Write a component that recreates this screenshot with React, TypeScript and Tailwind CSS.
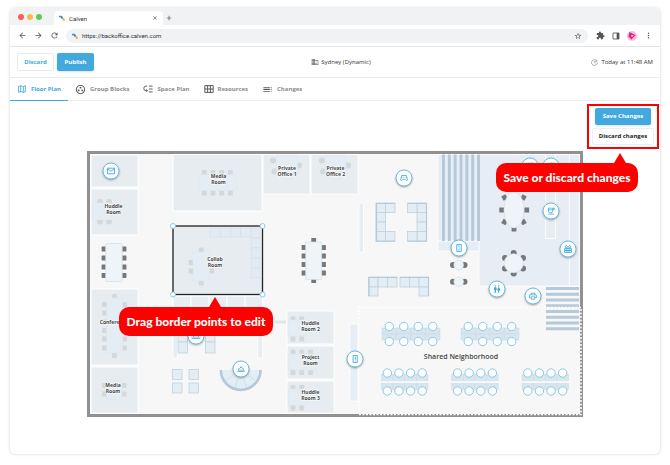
import type { ReactNode } from 'react';
import {
  MdArrowBack,
  MdArrowForward,
  MdClose,
  MdAdd,
  MdDomain,
  MdExtension,
  MdMoreVert,
  MdOutlineCoffee,
  MdOutlineGroupWork,
  MdOutlineMap,
  MdOutlinePrint,
  MdOutlineRoomService,
  MdOutlineWeekend,
  MdRefresh,
  MdStarBorder,
  MdToc,
  MdWc,
} from 'react-icons/md';

const PLAN_W = 496;
const PLAN_H = 266;

type Point = [number, number];
type Box = [number, number, number, number];

/* ---------- icons ---------- */

function CalvenLogo() {
  return (
    <svg viewBox="0 0 12 12" className="size-[6px] shrink-0" aria-hidden="true">
      <path d="M1 3h4" stroke="#2f9fe0" strokeWidth="3.500" strokeLinecap="round" />
      <path d="M5 4.500l2.500 3" stroke="#2b5f93" strokeWidth="3" />
      <path d="M8 7.500l2 2.500" stroke="#f5a94a" strokeWidth="4" strokeLinecap="round" />
    </svg>
  );
}

function SpacePlanIcon() {
  return (
    <svg viewBox="0 0 24 24" className="size-[10px]" fill="none" stroke="currentColor" strokeWidth="2.200" aria-hidden="true">
      <path d="M10 5H7a5 5 0 0 0-5 5v1a5 5 0 0 0 5 5h3M7.500 12.500l3.500 3.500-3.500 3.500M14 5h9M14 12h9M14 19h9" />
    </svg>
  );
}

function ResourcesIcon() {
  return (
    <svg viewBox="0 0 24 20" className="h-[8px] w-[10px]" fill="none" stroke="currentColor" strokeWidth="2.400" aria-hidden="true">
      <path d="M1.500 1.500h21v17h-21zM1.500 10h21M8.500 1.500v17M15.500 1.500v17" />
    </svg>
  );
}

function RefreshClockIcon() {
  return (
    <svg viewBox="0 0 24 24" className="size-[7px]" fill="none" stroke="currentColor" strokeWidth="2" aria-hidden="true">
      <path d="M19 5a10 10 0 1 0 3 7M20 2v6h-6M12 7v5l4 2" />
    </svg>
  );
}

function SidePanelIcon() {
  return (
    <svg viewBox="0 0 24 24" className="size-[8px]" aria-hidden="true">
      <path d="M3 3h18v18H3z" fill="none" stroke="currentColor" strokeWidth="2.500" />
      <path d="M14 3h7v18h-7z" fill="currentColor" />
    </svg>
  );
}

function PinIcon({ children }: { children: ReactNode }) {
  return (
    <svg viewBox="0 0 24 24" className="size-[9px]" fill="none" stroke="currentColor" strokeWidth="2.400" aria-hidden="true">
      {children}
    </svg>
  );
}

function MailIcon() {
  return (
    <PinIcon>
      <path d="M2.500 4.500h19v15h-19zM2.500 6l9.500 6.500L21.500 6" />
    </PinIcon>
  );
}

function GamepadIcon() {
  return (
    <PinIcon>
      <path d="M6 5h12l3 12c0 2-2.500 2.500-4 1l-3-3h-4l-3 3c-1.500 1.500-4 1-4-1zM8 10h3M15 10h1.500" />
    </PinIcon>
  );
}

function DoorIcon() {
  return (
    <PinIcon>
      <path d="M6 2.500h12v19H6zM10 7h4M10 17h4M13 12h2.500" />
    </PinIcon>
  );
}

function PhoneBoothIcon() {
  return (
    <PinIcon>
      <path d="M7 2.500h11v19H7zM13 6v8M12 18h2" />
    </PinIcon>
  );
}

function LockerIcon() {
  return (
    <PinIcon>
      <path d="M3 11h18v10H3zM9 11v10M15 11v10M3 16h18" />
      <circle cx="7.500" cy="6" r="3" />
      <circle cx="16.500" cy="6" r="3" />
    </PinIcon>
  );
}

/* ---------- browser window ---------- */

function BrowserChrome() {
  return (
    <div>
      <div className="flex h-[18px] items-end rounded-t-md bg-[#f0f2f4] pl-2">
        <div className="flex gap-[3px] pb-[5px]">
          <span className="size-[6px] rounded-full bg-[#fa5f57]" />
          <span className="size-[6px] rounded-full bg-[#f6bd4f]" />
          <span className="size-[6px] rounded-full bg-[#5fca56]" />
        </div>
        <div className="ml-3 flex h-[14px] w-[109px] items-center gap-1 rounded-t bg-white px-[5px] font-[Roboto,sans-serif] text-[6px] text-[#333]">
          <CalvenLogo />
          <span className="grow">Calven</span>
          <button type="button" aria-label="Close tab">
            <MdClose className="size-[6px]" />
          </button>
        </div>
        <button type="button" aria-label="New tab" className="mb-[3px] ml-[2px] text-[#444]">
          <MdAdd className="size-[8px]" />
        </button>
      </div>
      <div className="flex h-[22px] items-center border-b border-[#e3e5ea] pr-[7px] pl-2 text-[#555]">
        <div className="flex gap-[7px]">
          <button type="button" aria-label="Back">
            <MdArrowBack className="size-[9px]" />
          </button>
          <button type="button" aria-label="Forward">
            <MdArrowForward className="size-[9px]" />
          </button>
          <button type="button" aria-label="Reload">
            <MdRefresh className="size-[9px]" />
          </button>
        </div>
        <div className="ml-[7px] flex h-[14px] grow items-center gap-1 rounded-full bg-[#f0f2f4] px-[6px] font-[Roboto,sans-serif] text-[6px]">
          <CalvenLogo />
          <input
            aria-label="Address"
            defaultValue="https://backoffice.calven.com"
            className="min-w-0 grow bg-transparent text-[#333] outline-none"
          />
          <MdStarBorder className="size-[8px]" />
        </div>
        <div className="ml-2 flex items-center gap-[7px]">
          <MdExtension className="size-[9px]" />
          <SidePanelIcon />
          <span className="flex size-[10px] items-center justify-center rounded-full bg-[#f0c0e4]">
            <svg viewBox="0 0 12 12" className="size-[8px]" fill="none" stroke="#e0246c" strokeWidth="1.800" aria-hidden="true">
              <path d="M3 1.500l7 3.500-5 5zM3 1.500L1.500 6 5 10" />
            </svg>
          </span>
          <MdMoreVert className="size-[9px]" />
        </div>
      </div>
    </div>
  );
}

function PublishBar() {
  return (
    <header className="flex h-[31px] items-center justify-between border-b border-[#e8eaee] px-[7px] text-[6px] text-[#333]">
      <div className="flex flex-1 gap-[3px] font-bold">
        <button type="button" className="h-[18px] w-[37px] rounded-xs border border-[#e6ebef] text-[#42a9de]">
          Discard
        </button>
        <button type="button" className="h-[18px] w-[37px] rounded-xs bg-[#42a9de] text-white shadow-sm">
          Publish
        </button>
      </div>
      <div className="flex items-center gap-[2px] pl-3">
        <MdDomain className="size-[8px] text-[#777]" />
        Sydney (Dynamic)
      </div>
      <div className="flex flex-1 items-center justify-end gap-[3px]">
        <span className="text-[#777]">
          <RefreshClockIcon />
        </span>
        Today at 11:48 AM
      </div>
    </header>
  );
}

const tabs = [
  { label: 'Floor Plan', icon: <MdOutlineMap className="size-[10px]" />, active: true },
  { label: 'Group Blocks', icon: <MdOutlineGroupWork className="size-[11px]" /> },
  { label: 'Space Plan', icon: <SpacePlanIcon /> },
  { label: 'Resources', icon: <ResourcesIcon /> },
  { label: 'Changes', icon: <MdToc className="size-[11px]" /> },
];

function Tabs() {
  return (
    <nav className="flex h-[23px] border-b border-[#eceef3] text-[6px] font-bold text-[#8b8b8b]">
      {tabs.map((tab) => (
        <button
          key={tab.label}
          type="button"
          className={
            tab.active
              ? '-mb-px flex items-center gap-1 border-b border-[#42a9de] px-[7px] text-[#42a9de]'
              : 'flex items-center gap-1 px-[7px]'
          }
        >
          <span className={tab.active ? 'text-[#42a9de]' : 'text-[#555]'}>{tab.icon}</span>
          {tab.label}
        </button>
      ))}
    </nav>
  );
}

/* ---------- floor plan drawing ---------- */

function Rects({ boxes, className }: { boxes: Box[]; className: string }) {
  return (
    <g className={className}>
      {boxes.map(([x, y, w, h]) => (
        <rect key={`${x}-${y}`} x={x} y={y} width={w} height={h} />
      ))}
    </g>
  );
}

function Chairs({ at, className }: { at: Point[]; className: string }) {
  return (
    <g className={className}>
      {at.map(([x, y]) => (
        <rect key={`${x}-${y}`} x={x - 2.4} y={y - 2.4} width="4.800" height="4.800" rx="0.500" />
      ))}
    </g>
  );
}

function RoundChairs({ at, className }: { at: Point[]; className: string }) {
  return (
    <g className={className}>
      {at.map(([x, y]) => (
        <circle key={`${x}-${y}`} cx={x} cy={y} r="3" />
      ))}
    </g>
  );
}

function RoomLabel({ x, y, lines }: { x: number; y: number; lines: string[] }) {
  return (
    <text
      textAnchor="middle"
      className="fill-[#444] stroke-white stroke-1 text-[5px] font-bold [paint-order:stroke]"
    >
      {lines.map((line, i) => (
        <tspan key={line} x={x} y={y + i * 6}>
          {line}
        </tspan>
      ))}
    </text>
  );
}

function DeskRow({ x, y, width, split }: { x: number; y: number; width: number; split: number }) {
  const step = width / 4;
  const h = 6;
  return (
    <g>
      {[0, 1, 2, 3].map((i) => (
        <g key={i} className="fill-[#d7e5ee] stroke-[#c6dae6]" strokeWidth="0.500">
          <rect x={x + i * step} y={y} width={step} height={h} />
          <rect x={x + i * step} y={y + h + split} width={step} height={h} />
        </g>
      ))}
      {[0, 1, 2, 3].map((i) => (
        <g key={i} className="fill-white stroke-[#7cc4e8]" strokeWidth="0.900">
          <circle cx={x + (i + 0.5) * step} cy={y - 1.5} r="4.200" />
          <circle cx={x + (i + 0.5) * step} cy={y + 2 * h + split + 1.5} r="4.200" />
        </g>
      ))}
    </g>
  );
}

const rooms: Box[] = [
  [4, 4, 47, 32],
  [4, 38, 47, 46],
  [86, 3.5, 89, 56.5],
  [176, 3.5, 47, 39.5],
  [224, 3.5, 47, 39.5],
  [4, 138, 47, 76],
  [4, 216, 47, 46],
  [200, 160, 47, 33],
  [200, 195, 47, 33],
  [200, 230, 47, 32],
];

const zones: Box[] = [
  [392, 3.5, 100, 131.5],
  [351, 3.5, 41, 86.5],
  [351, 90, 41, 10],
  [263, 173, 8, 77],
  [272, 52, 4.5, 49],
  [458.7, 3.5, 10, 84],
  [482.3, 3.5, 10, 131.5],
  [86, 145, 4.5, 62],
  [171, 145, 4.5, 62],
];

const sofas: Box[] = [
  [289, 52, 9.5, 9.5], [289, 61.5, 9.5, 9.5], [289, 71, 9.5, 9.5], [289, 80.5, 9.5, 10],
  [298.5, 52, 9.5, 9.5], [298.5, 80.5, 9.5, 10],
  [330, 52, 9.5, 9.5], [330, 61.5, 9.5, 9.5], [330, 71, 9.5, 9.5], [330, 80.5, 9.5, 10],
  [320.5, 52, 9.5, 9.5], [320.5, 80.5, 9.5, 10],
  [281.5, 126, 9.5, 10], [291, 126, 9.5, 10], [300.5, 126, 9.5, 10], [281.5, 136, 9.5, 9],
  [313, 126, 9.5, 10], [322.5, 126, 9.5, 10], [332, 126, 9.5, 10], [332, 136, 9.5, 9],
  [85.5, 218.5, 9.5, 10], [102, 218.5, 9.5, 10], [85.5, 232, 9.5, 10], [102, 232, 9.5, 10],
  [91, 180, 9.5, 11], [91, 191, 9.5, 11], [118.5, 180, 9.5, 11], [118.5, 191, 9.5, 11],
];

// darker backrests along the outer edge of each sofa
const sofaBacks = [
  'M308 52.500H289.500V90H308',
  'M320.500 52.500H339.500V90H320.500',
  'M310 126.500H282V145',
  'M313 126.500H341.500V145',
];

const collabSofa: Box[] = [
  [123, 77, 10.3, 9], [133.3, 77, 10.3, 9], [143.6, 77, 10.3, 9], [153.9, 77, 10.3, 9], [164.2, 77, 10, 10],
  [164.2, 87, 10, 10], [164.2, 97, 10, 10], [164.2, 107, 10, 10], [164.2, 117, 10, 10],
];

const paleTables: Box[] = [
  [112, 23.5, 37.5, 16],
  [5, 52, 20, 17],
  [19.5, 147, 16, 55],
  [19.5, 229, 15.5, 19],
  [189.5, 4, 21, 19],
  [238, 4, 21, 19],
  [201, 169, 18, 16],
  [201, 203, 27, 16],
  [201, 238, 18, 16],
];

const darkChairs: Point[] = [
  [17, 98], [17, 107], [17, 116], [17, 124.5],
  [37, 98], [37, 107], [37, 116], [37, 124.5],
  [217, 96.5], [217, 105], [217, 113.5], [217, 122],
  [236.5, 96.5], [236.5, 105], [236.5, 113.5], [236.5, 122],
  [226.7, 89.5], [226.7, 129.5],
  [414.7, 59], [439.7, 59], [427, 78],
];

const tiltedChairs: Point[] = [[417.5, 46.5], [436.5, 46.5], [417.5, 71], [436.5, 71]];

const lightChairs: Point[] = [
  [117.3, 21.5], [126, 21.5], [134.7, 21.5], [143.3, 21.5],
  [117.3, 42], [126, 42], [134.7, 42], [143.3, 42],
  [17.5, 153.5], [17.5, 162], [17.5, 171], [17.5, 179.5], [17.5, 188], [17.5, 197],
  [37.5, 153.5], [37.5, 162], [37.5, 171], [37.5, 179.5], [37.5, 188], [37.5, 197],
  [27.5, 145.5], [27.5, 204.5],
  [17.5, 234.5], [17.5, 243], [37, 234.5], [37, 243],
  [206, 168], [214.7, 168], [206, 188], [214.7, 188],
  [206, 201], [214.7, 201], [223.5, 201], [206, 221.5], [214.7, 221.5], [223.5, 221.5],
  [206, 236.5], [214.7, 236.5], [206, 257], [214.7, 257],
];

const collabChairs: Point[] = [[114.3, 99], [104, 111.5], [104, 120], [124.7, 120], [114.3, 132]];

const corners: Point[] = [[86, 75], [175.5, 75], [86, 143.5], [175.5, 143.5]];

function arcPoint(radius: number, degrees: number) {
  const a = (degrees * Math.PI) / 180;
  return `${153.7 + radius * Math.cos(a)} ${219 + radius * Math.sin(a)}`;
}

function FloorPlan() {
  return (
    <svg
      viewBox={`0 0 ${PLAN_W} ${PLAN_H}`}
      className="block w-full"
      role="img"
      aria-label="Floor plan"
    >
      <rect x="1.500" y="1.500" width="493" height="263" className="fill-[#f7f7f7] stroke-[#919191]" strokeWidth="3" />
      <Rects boxes={zones} className="fill-[#e7edf4] stroke-white stroke-[0.8]" />
      <Rects boxes={rooms} className="fill-[#e6ecf0] stroke-white stroke-1" />

      {/* stairs */}
      <g className="fill-[#b5c9d9]">
        {[0, 1, 2, 3, 4, 5, 6].map((i) => (
          <rect key={i} x={355 + i * 5.85} y="3.500" width="2.900" height="86.500" />
        ))}
        {[0, 1, 2, 3, 4, 5, 6, 7].map((i) => (
          <rect key={i} x="459" y={136 + i * 5.75} width="33" height="3" />
        ))}
      </g>

      {/* lounge under the collab room */}
      <Rects
        boxes={[[86, 145, 18, 18], [104, 145, 18, 18], [122, 145, 18, 18], [140, 145, 18, 18], [158, 145, 17.5, 18]]}
        className="fill-[#e9eef3] stroke-white stroke-1"
      />
      <Rects boxes={sofas} className="fill-[#e4edf4] stroke-[#bfd1df] stroke-[0.8]" />
      <g className="fill-none stroke-[#b5c9d9]" strokeWidth="1.200">
        {sofaBacks.map((d) => (
          <path key={d} d={d} />
        ))}
      </g>
      <path d={`M${arcPoint(18, 0)}A18 18 0 0 1 ${arcPoint(18, 180)}H145A9 9 0 0 0 162.500 219z`} className="fill-[#e4edf4]" />
      <path d={`M${arcPoint(19.8, 0)}A19.800 19.800 0 0 1 ${arcPoint(19.8, 180)}`} className="fill-none stroke-[#b5c9d9]" strokeWidth="2.800" />
      {[36, 72, 108, 144].map((deg) => (
        <path key={deg} d={`M${arcPoint(9, deg)}L${arcPoint(18.5, deg)}`} className="stroke-[#c6d7e3]" strokeWidth="0.700" />
      ))}

      <Chairs at={lightChairs} className="fill-[#d3d8db]" />
      <RoundChairs
        at={[[13, 51], [22, 51], [13, 70.5], [22, 70.5], [186, 9.5], [187.5, 20.5], [212, 14.5], [235, 9.5], [236, 20.5], [261, 14.5]]}
        className="fill-[#d3d8db]"
      />
      <circle cx="200" cy="21" r="7.500" className="fill-[#e9eef3] stroke-[#d9e1e7]" strokeWidth="0.500" />
      <circle cx="248.500" cy="21" r="7.500" className="fill-[#e9eef3] stroke-[#d9e1e7]" strokeWidth="0.500" />
      <Rects boxes={paleTables} className="fill-[#e5edf4] stroke-[#dce5ec] stroke-[0.5]" />
      <rect x="188" y="169.500" width="11" height="3" className="fill-[#e3e5e6]" />

      <Chairs at={darkChairs} className="fill-[#777]" />
      <g className="fill-[#777]">
        {tiltedChairs.map(([x, y]) => (
          <rect
            key={`${x}-${y}`}
            x={x - 2.4}
            y={y - 2.4}
            width="4.800"
            height="4.800"
            transform={`rotate(${(x < 427) === (y < 59) ? -30 : 30} ${x} ${y})`}
          />
        ))}
      </g>
      <RoundChairs
        at={[
          [426.7, 102], [418, 107], [436, 107], [418, 117.5], [436, 117.5], [426.7, 122.5],
          [366, 114], [377.5, 114], [366, 130.7], [377.5, 130.7],
        ]}
        className="fill-[#777]"
      />
      <g className="fill-[#eef4f8] stroke-[#cfdfe9]" strokeWidth="0.700">
        <rect x="18.700" y="92.500" width="16.500" height="38" rx="0.500" />
        <rect x="218.700" y="91" width="16" height="37.500" rx="0.500" />
        <ellipse cx="427" cy="59" rx="10" ry="18" />
        <circle cx="426.700" cy="112.300" r="9.500" />
        <circle cx="371.700" cy="114" r="4.800" />
        <circle cx="371.700" cy="130.700" r="4.800" />
      </g>

      {/* selected room */}
      <rect x="86" y="75" width="89.500" height="68.500" className="fill-[#e6ecf0] stroke-[#222]" strokeWidth="1.300" />
      <Rects boxes={collabSofa} className="fill-[#e2eaf3] stroke-[#d5dfe9] stroke-[0.6]" />
      <Chairs at={collabChairs} className="fill-[#d3d8db]" />
      <Rects boxes={[[106, 101, 16.5, 29]]} className="fill-[#e5edf4] stroke-[#dce5ec] stroke-[0.5]" />
      {corners.map(([x, y]) => (
        <circle key={`${x}-${y}`} cx={x} cy={y} r="2.500" className="fill-white stroke-[#7cc4e8]" strokeWidth="0.900" />
      ))}

      {/* shared neighborhood */}
      <rect x="271.500" y="156.500" width="222.500" height="107" className="fill-none stroke-white" strokeWidth="1.500" strokeDasharray="2 1.500" />
      <DeskRow x={295} y={177} width={58} split={0} />
      <DeskRow x={374} y={177} width={58} split={0} />
      <DeskRow x={294.5} y={223.5} width={46.5} split={3} />
      <DeskRow x={364.7} y={223.5} width={46.5} split={3} />
      <DeskRow x={435} y={223.5} width={46.5} split={3} />
      <text x="374" y="208" textAnchor="middle" className="fill-[#444] font-['Open_Sans',sans-serif] text-[7px] font-semibold">
        Shared Neighborhood
      </text>

      <RoomLabel x={26.5} y={57} lines={['Huddle', 'Room']} />
      <RoomLabel x={131.5} y={27} lines={['Media', 'Room']} />
      <RoomLabel x={200} y={19} lines={['Private', 'Office 1']} />
      <RoomLabel x={248.5} y={19} lines={['Private', 'Office 2']} />
      <RoomLabel x={128} y={110} lines={['Collab', 'Room']} />
      <RoomLabel x={27} y={173} lines={['Conference']} />
      <RoomLabel x={26} y={236} lines={['Media', 'Room']} />
      <RoomLabel x={223.5} y={173.5} lines={['Huddle', 'Room 2']} />
      <RoomLabel x={223.5} y={208} lines={['Project', 'Room']} />
      <RoomLabel x={223.5} y={243} lines={['Huddle', 'Room 3']} />
    </svg>
  );
}

const pins: { name: string; x: number; y: number; icon: ReactNode }[] = [
  { name: 'Mail', x: 24, y: 20, icon: <MailIcon /> },
  { name: 'Games', x: 317, y: 27, icon: <GamepadIcon /> },
  { name: 'Elevator', x: 372, y: 97, icon: <DoorIcon /> },
  { name: 'Kitchen', x: 443, y: 15, icon: <MdOutlineCoffee /> },
  { name: 'Water', x: 464, y: 15, icon: <MdOutlineCoffee /> },
  { name: 'Coffee', x: 464, y: 60, icon: <MdOutlineCoffee /> },
  { name: 'Lockers', x: 481, y: 98, icon: <LockerIcon /> },
  { name: 'Restrooms', x: 410, y: 138, icon: <MdWc /> },
  { name: 'Printer', x: 446, y: 145, icon: <MdOutlinePrint /> },
  { name: 'Reception', x: 154, y: 218, icon: <MdOutlineRoomService /> },
  { name: 'Lounge', x: 109, y: 185, icon: <MdOutlineWeekend /> },
  { name: 'Phone booth', x: 268, y: 208, icon: <PhoneBoothIcon /> },
];

function Callout({ className, tail, children }: { className: string; tail: string; children: ReactNode }) {
  return (
    <div className={`absolute z-10 rounded-[10px] bg-[#fd0000] text-center font-[Lato,sans-serif] text-[12px] leading-[29px] font-black whitespace-nowrap text-white ${className}`}>
      <span className={`absolute bottom-full border-x-6 border-b-10 border-x-transparent border-b-[#fd0000] ${tail}`} />
      {children}
    </div>
  );
}

function PlanCanvas() {
  return (
    <div className="relative">
      <FloorPlan />
      {pins.map((pin) => (
        <button
          key={pin.name}
          type="button"
          aria-label={pin.name}
          className="absolute flex size-[17px] -translate-1/2 items-center justify-center rounded-full border border-[#6bbde5] bg-white text-[9px] text-[#42a9de] shadow-[0_1px_2px_rgba(0,0,0,0.3)]"
          style={{ left: `${(pin.x / PLAN_W) * 100}%`, top: `${(pin.y / PLAN_H) * 100}%` }}
        >
          {pin.icon}
        </button>
      ))}
      <Callout className="top-[156px] left-[32px] w-[154px]" tail="left-[90px]">
        Drag border points to edit
      </Callout>
    </div>
  );
}

export default function App() {
  return (
    <div className="bg-white px-[9px] pt-[7px] pb-[11px] font-['Open_Sans',sans-serif]">
      <div className="rounded-md border-x border-b border-[#eceef0] shadow-[0_0_3px_rgba(0,0,0,0.08)]">
        <BrowserChrome />
        <PublishBar />
        <Tabs />
        <main className="pt-[3px] pb-[37px]">
          <div className="relative mr-px ml-auto flex w-[72px] flex-col items-center gap-[3px] border-2 border-[#fd0000] py-[2px] text-[6px] font-bold">
            <button type="button" className="h-[17px] w-[56px] rounded-xs bg-[#42a9de] text-white shadow-sm">
              Save Changes
            </button>
            <button type="button" className="h-[17px] w-[62px] rounded-xs border border-[#eceef0] text-[#222]">
              Discard changes
            </button>
            <Callout className="top-[57px] right-[19px] w-[142px]" tail="right-[12px]">
              Save or discard changes
            </Callout>
          </div>
          <div className="mt-[2px] px-[77px]">
            <PlanCanvas />
          </div>
        </main>
      </div>
    </div>
  );
}
